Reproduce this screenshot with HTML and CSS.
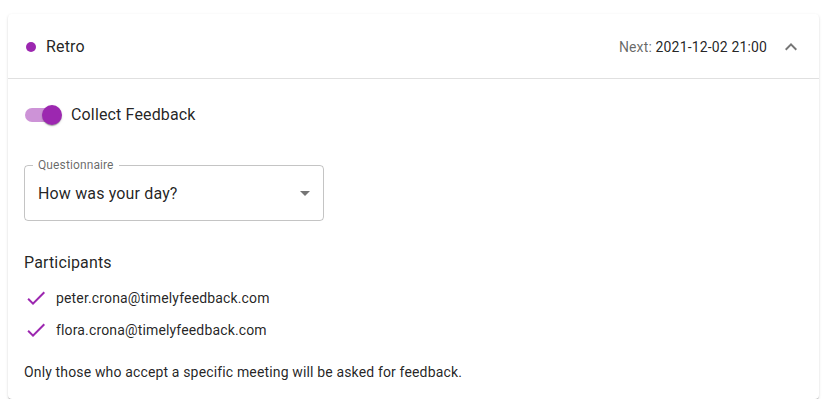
FILE: index.html
```html
<!DOCTYPE html>
<html>
<head>
<meta charset="utf-8">
<link rel="stylesheet" href="styles.css">
</head>
<body>
<div class="card">
  <div class="summary">
    <div class="title">
      <span class="dot"></span>
      <span class="name">Retro</span>
    </div>
    <div class="next"><span class="next-label">Next:</span> 2021-12-02 21:00</div>
    <div class="expand">
      <svg viewBox="0 0 24 24" width="24" height="24"><path d="M12 8l-6 6 1.41 1.41L12 10.83l4.59 4.58L18 14z" fill="rgba(0,0,0,0.54)"/></svg>
    </div>
  </div>
  <div class="details">
    <label class="switch-row">
      <span class="switch">
        <span class="track"></span>
        <span class="thumb"></span>
      </span>
      <span class="switch-label">Collect Feedback</span>
    </label>
    <div class="select">
      <fieldset class="outline"><legend><span>Questionnaire</span></legend></fieldset>
      <span class="select-label">Questionnaire</span>
      <span class="select-value">How was your day?</span>
      <svg class="arrow" viewBox="0 0 24 24" width="24" height="24"><path d="M7 10l5 5 5-5z" fill="rgba(0,0,0,0.54)"/></svg>
    </div>
    <div class="participants-title">Participants</div>
    <ul class="list">
      <li class="item">
        <svg viewBox="0 0 24 24" width="24" height="24"><path d="M9 16.17L4.83 12l-1.42 1.41L9 19 21 7l-1.41-1.41z" fill="#9c27b0"/></svg>
        <span>peter.crona@timelyfeedback.com</span>
      </li>
      <li class="item">
        <svg viewBox="0 0 24 24" width="24" height="24"><path d="M9 16.17L4.83 12l-1.42 1.41L9 19 21 7l-1.41-1.41z" fill="#9c27b0"/></svg>
        <span>flora.crona@timelyfeedback.com</span>
      </li>
    </ul>
    <p class="note">Only those who accept a specific meeting will be asked for feedback.</p>
  </div>
</div>
</body>
</html>
```
FILE: styles.css
```css
html, body {
  margin: 0;
  padding: 0;
  background: #fff;
}
body {
  padding: 14px 5px 0 8px;
  font-family: Roboto, "Liberation Sans", sans-serif;
  color: rgba(0, 0, 0, 0.87);
}
.card {
  background: #fff;
  border-radius: 4px;
  box-shadow: 0px 2px 1px -1px rgba(0,0,0,0.2), 0px 1px 1px 0px rgba(0,0,0,0.14), 0px 1px 3px 0px rgba(0,0,0,0.12);
  height: 385px;
  box-sizing: border-box;
}
.summary {
  display: flex;
  align-items: center;
  height: 65px;
  box-sizing: border-box;
  padding: 1px 16px 0 16px;
  border-bottom: 1px solid rgba(0, 0, 0, 0.12);
}
.title {
  flex: 1;
  display: flex;
  align-items: center;
}
.dot {
  width: 10px;
  height: 10px;
  border-radius: 50%;
  background: #9c27b0;
  margin-left: 2px;
  margin-right: 10px;
}
.name {
  font-size: 16px;
  line-height: 24px;
  letter-spacing: 0.00938em;
}
.next {
  font-size: 14px;
  line-height: 20px;
  letter-spacing: 0.01071em;
}
.next-label {
  color: rgba(0, 0, 0, 0.6);
}
.expand {
  display: flex;
  padding: 12px;
  margin-right: -12px;
}
.expand svg {
  display: block;
}
.details {
  padding: 17px 16px 0 16px;
}
.switch-row {
  display: flex;
  align-items: center;
  margin-left: -11px;
  height: 38px;
}
.switch {
  position: relative;
  width: 58px;
  height: 38px;
  padding: 12px;
  box-sizing: border-box;
  flex: none;
}
.track {
  display: block;
  width: 34px;
  height: 14px;
  border-radius: 7px;
  background: #9c27b0;
  opacity: 0.5;
}
.thumb {
  position: absolute;
  top: 9px;
  left: 29px;
  width: 20px;
  height: 20px;
  border-radius: 50%;
  background: #9c27b0;
  box-shadow: 0px 2px 1px -1px rgba(0,0,0,0.2), 0px 1px 1px 0px rgba(0,0,0,0.14), 0px 1px 3px 0px rgba(0,0,0,0.12);
}
.switch-label {
  font-size: 16px;
  line-height: 24px;
  letter-spacing: 0.00938em;
}
.select {
  position: relative;
  margin-top: 31px;
  width: 300px;
  height: 56px;
  box-sizing: border-box;
  display: flex;
  align-items: center;
  padding: 2px 14px 0 14px;
}
.outline {
  position: absolute;
  top: -5px;
  left: 0;
  right: 0;
  bottom: 0;
  margin: 0;
  padding: 0 8px;
  border: 1px solid rgba(0, 0, 0, 0.23);
  border-radius: 4px;
  pointer-events: none;
}
.outline legend {
  font-size: 12px;
  padding: 0;
  height: 11px;
  visibility: hidden;
  line-height: 11px;
  letter-spacing: 0.00938em;
}
.outline legend span {
  padding: 0 5px;
}
.select-label {
  position: absolute;
  left: 14px;
  top: -7px;
  font-size: 12px;
  line-height: 14px;
  letter-spacing: 0.00938em;
  color: rgba(0, 0, 0, 0.6);
}
.select-value {
  flex: 1;
  font-size: 16px;
  line-height: 24px;
  letter-spacing: 0.00938em;
}
.arrow {
  position: absolute;
  right: 7px;
  top: 16px;
}
.participants-title {
  margin-top: 30px;
  font-size: 16px;
  line-height: 24px;
  letter-spacing: 0.00938em;
}
.list {
  list-style: none;
  margin: 7px 0 0 0;
  padding: 0;
}
.item {
  display: flex;
  align-items: center;
  height: 32px;
  font-size: 14px;
  letter-spacing: 0.01071em;
}
.item svg {
  display: block;
  width: 24px;
  height: 24px;
  margin-right: 8px;
  flex: none;
}
.note {
  margin: 16px 0 0 0;
  font-size: 14px;
  line-height: 20px;
  letter-spacing: 0.01071em;
}
```
